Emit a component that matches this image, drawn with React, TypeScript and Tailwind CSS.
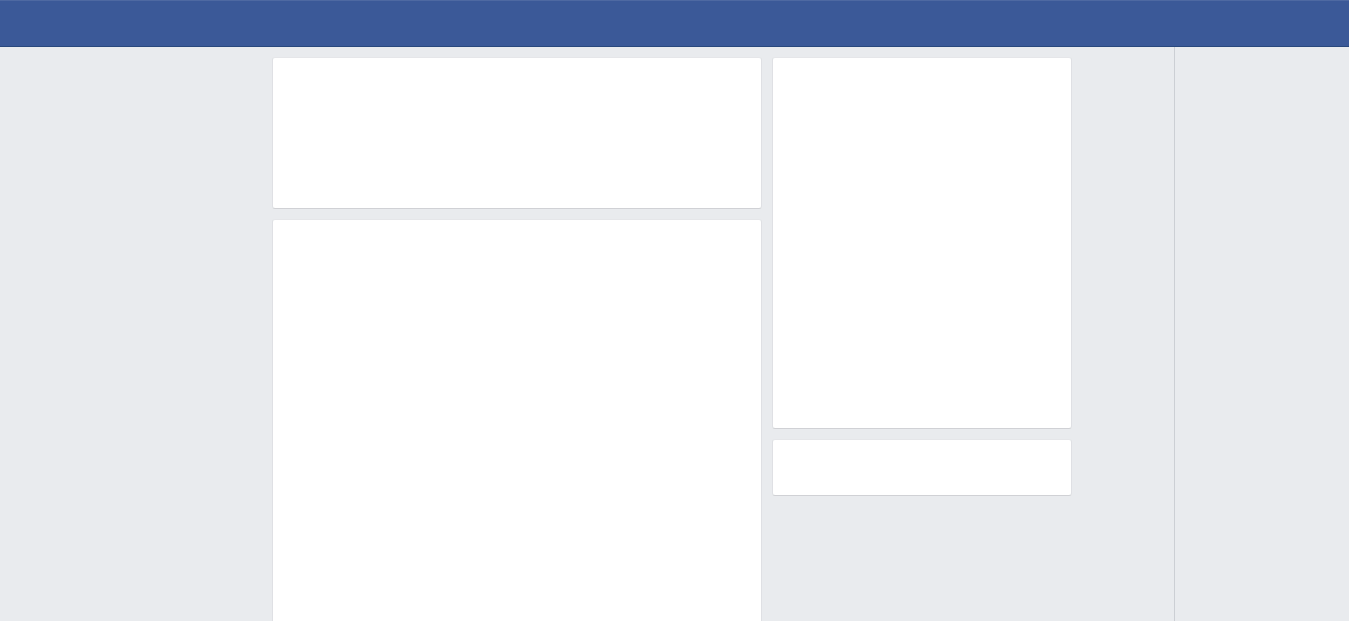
function Card({ className }: { className: string }) {
  return (
    <div
      className={
        "bg-white border border-[#dfe0e4] border-t-[#e5e6e9] border-b-[#d0d1d5] rounded-[3px] " +
        className
      }
    />
  );
}

export default function App() {
  return (
    <div className="min-h-screen bg-[#e9ebee] font-['Liberation_Sans',Arial,sans-serif]">
      {/* barra superior */}
      <div className="h-[47px] bg-[#3b5998] border-t border-t-[#4e69a2] border-b border-b-[#29487d]" />

      <div className="flex">
        <div className="flex-1 flex gap-[10px] pl-[272px] pt-[10px]">
          {/* columna principal */}
          <div className="w-[490px] flex flex-col gap-[10px]">
            <Card className="h-[152px]" />
            <Card className="h-[520px]" />
          </div>

          {/* columna derecha */}
          <div className="w-[300px] flex flex-col gap-[10px]">
            <Card className="h-[372px]" />
            <Card className="h-[57px]" />
          </div>
        </div>

        {/* chat lateral */}
        <div className="w-[175px] shrink-0 border-l border-l-[#cccfd4] bg-[#e9ebee]" />
      </div>
    </div>
  );
}
